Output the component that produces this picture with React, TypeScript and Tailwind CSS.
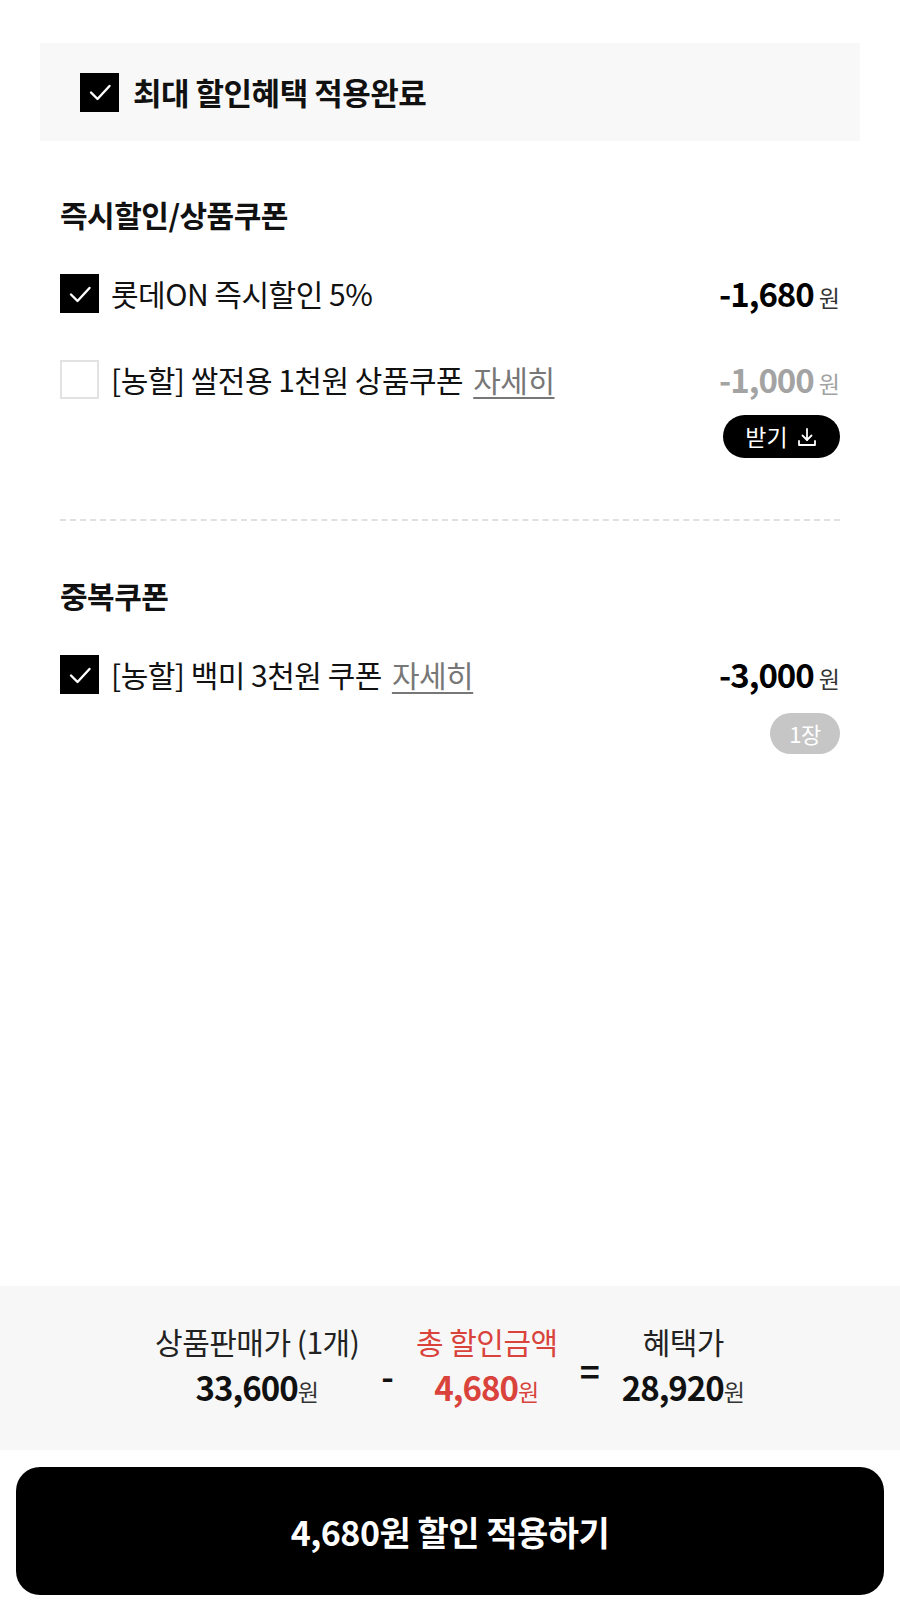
import React from 'react';

const font = { fontFamily: '"Noto Sans CJK KR", "Noto Sans", sans-serif' };

const CheckBox: React.FC<{ checked: boolean }> = ({ checked }) =>
    checked ? (
        <div className="w-[39px] h-[39px] bg-black flex items-center justify-center shrink-0">
            <svg width="28" height="28" viewBox="0 0 28 28" fill="none">
                <path d="M5 14.5 L11.5 21 L23.5 8" stroke="white" strokeWidth="2.4" strokeLinecap="round" strokeLinejoin="round" />
            </svg>
        </div>
    ) : (
        <div className="w-[39px] h-[39px] border-2 border-[#e2e2e2] bg-white shrink-0" />
    );

const Amount: React.FC<{ value: string; muted?: boolean }> = ({ value, muted }) => (
    <div className={`flex items-baseline gap-[5px] ${muted ? 'text-[#a3a3a3]' : 'text-black'}`}>
        <span className="text-[33px] font-bold tracking-[-1px]">{value}</span>
        <span className={`text-[23px] ${muted ? 'text-[#a3a3a3]' : 'text-[#333]'}`}>원</span>
    </div>
);

const CouponRow: React.FC<{ checked: boolean; label: string; detail?: boolean; amount: string; muted?: boolean }> = ({ checked, label, detail, amount, muted }) => (
    <div className="flex items-center justify-between h-[39px]">
        <div className="flex items-center gap-[12px]">
            <CheckBox checked={checked} />
            <span className="text-[30px] text-[#111] tracking-[-0.5px]">
                {label}
                {detail && <span className="ml-[10px] text-[#777] underline underline-offset-[5px] decoration-[1.5px]">자세히</span>}
            </span>
        </div>
        <Amount value={amount} muted={muted} />
    </div>
);

const App: React.FC = () => {
    return (
        <div className="w-full h-[1611px] bg-white flex flex-col" style={font}>
            <div className="px-[40px] pt-[43px]">
                <div className="h-[98px] bg-[#f8f8f8] flex items-center pl-[40px] gap-[14px]">
                    <CheckBox checked />
                    <span className="text-[31px] font-bold text-[#111] tracking-[-0.5px]">최대 할인혜택 적용완료</span>
                </div>
            </div>

            <div className="px-[60px]">
                <h2 className="mt-[53px] text-[30px] leading-[40px] font-bold text-[#111] tracking-[-0.5px]">즉시할인/상품쿠폰</h2>
                <div className="mt-[40px]">
                    <CouponRow checked label="롯데ON 즉시할인 5%" amount="-1,680" />
                </div>
                <div className="mt-[47px]">
                    <CouponRow checked={false} label="[농할] 쌀전용 1천원 상품쿠폰" detail amount="-1,000" muted />
                </div>
                <div className="mt-[16px] flex justify-end">
                    <button className="h-[43px] w-[117px] rounded-full bg-black text-white flex items-center justify-center gap-[8px] text-[23px]">
                        받기
                        <svg width="22" height="22" viewBox="0 0 22 22" fill="none" stroke="white" strokeWidth="1.8" strokeLinecap="round" strokeLinejoin="round">
                            <path d="M11 3 V14" />
                            <path d="M6.5 9.5 L11 14 L15.5 9.5" />
                            <path d="M3 15 V19 H19 V15" />
                        </svg>
                    </button>
                </div>

                <div className="mt-[61px] border-t-2 border-dashed border-[#e0e0e0]" />

                <h2 className="mt-[54px] text-[30px] leading-[40px] font-bold text-[#111] tracking-[-0.5px]">중복쿠폰</h2>
                <div className="mt-[40px]">
                    <CouponRow checked label="[농할] 백미 3천원 쿠폰" detail amount="-3,000" />
                </div>
                <div className="mt-[19px] flex justify-end">
                    <span className="h-[41px] w-[70px] rounded-full bg-[#c6c6c6] text-white flex items-center justify-center text-[22px] tracking-[-0.5px]">1장</span>
                </div>
            </div>

            <div className="flex-1" />

            <div className="h-[164px] bg-[#f7f7f7] flex items-center justify-center gap-[22px]">
                <div className="flex flex-col items-center">
                    <span className="text-[30px] text-[#222] tracking-[-0.5px] leading-[44px]">상품판매가 (1개)</span>
                    <span className="text-[#111] leading-[48px]">
                        <span className="text-[33px] font-bold tracking-[-1px]">33,600</span>
                        <span className="text-[23px] text-[#333]">원</span>
                    </span>
                </div>
                <span className="text-[34px] font-bold text-[#111] mt-[14px]">-</span>
                <div className="flex flex-col items-center">
                    <span className="text-[30px] text-[#d9433c] tracking-[-0.5px] leading-[44px]">총 할인금액</span>
                    <span className="text-[#d9433c] leading-[48px]">
                        <span className="text-[33px] font-bold tracking-[-1px]">4,680</span>
                        <span className="text-[23px]">원</span>
                    </span>
                </div>
                <span className="text-[34px] font-bold text-[#111] mt-[4px]">=</span>
                <div className="flex flex-col items-center">
                    <span className="text-[30px] text-[#222] tracking-[-0.5px] leading-[44px]">혜택가</span>
                    <span className="text-[#111] leading-[48px]">
                        <span className="text-[33px] font-bold tracking-[-1px]">28,920</span>
                        <span className="text-[23px] text-[#333]">원</span>
                    </span>
                </div>
            </div>

            <div className="px-[16px] pt-[17px] pb-[16px]">
                <button className="w-full h-[128px] rounded-[24px] bg-black text-white text-[34px] font-bold tracking-[-0.5px]">
                    4,680원 할인 적용하기
                </button>
            </div>
        </div>
    );
};

export default App;
